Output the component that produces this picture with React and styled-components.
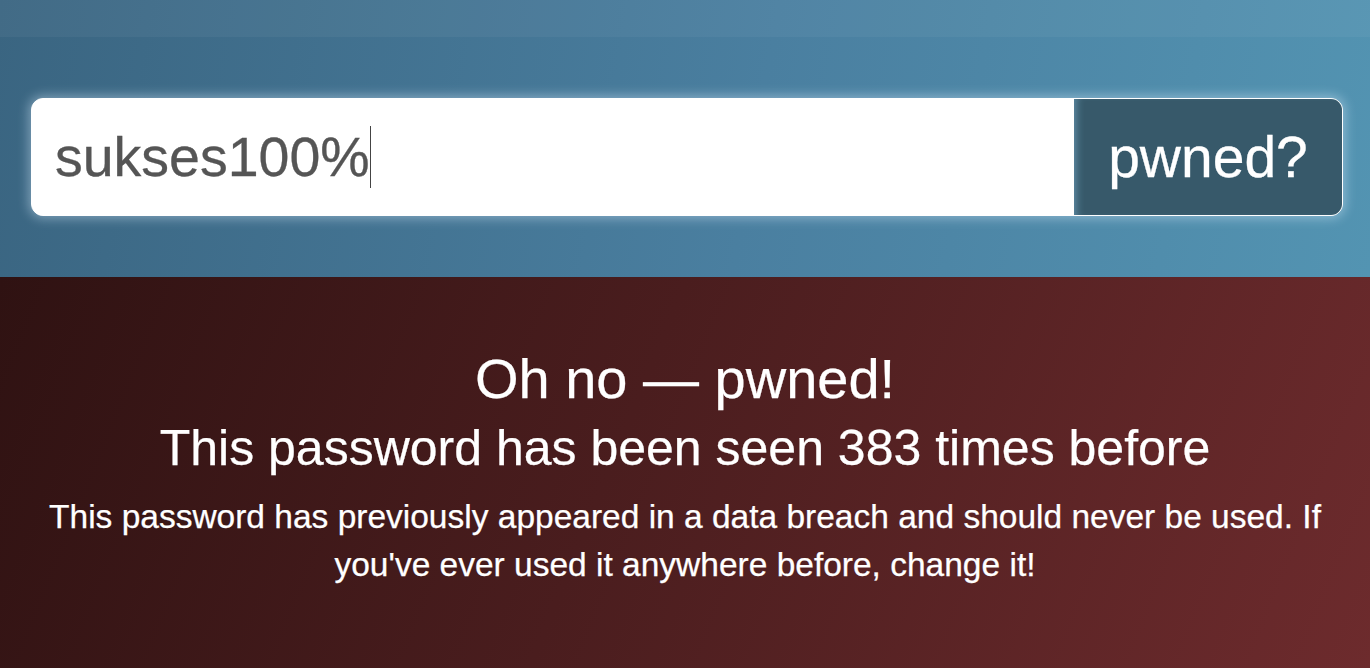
import React from "react";
import styled, { createGlobalStyle } from "styled-components";

const GlobalStyle = createGlobalStyle`
  html, body {
    margin: 0;
    padding: 0;
    height: 100%;
  }
  body {
    font-family: "Liberation Sans", Arial, Helvetica, sans-serif;
    background: #3a6581;
  }
`;

const Page = styled.div`
  width: 100%;
  min-height: 668px;
  display: flex;
  flex-direction: column;
`;

const Hero = styled.section`
  background: linear-gradient(100deg, #3a6581 0%, #4a7fa0 55%, #5394b2 100%);
  display: flex;
  flex-direction: column;
`;

const TopBand = styled.div`
  height: 37px;
  background: rgba(255, 255, 255, 0.045);
`;

const SearchWrap = styled.div`
  padding: 61px 27px 61px 31px;
`;

const SearchBox = styled.form`
  display: flex;
  height: 118px;
  box-sizing: border-box;
  border: 1.5px solid #fff;
  border-radius: 12px;
  overflow: hidden;
  background: #fff;
  box-shadow: 0 0 12px 2px rgba(220, 240, 255, 0.45);
`;

const Field = styled.div`
  flex: 1;
  display: flex;
  align-items: center;
  padding-left: 23px;
  font-size: 55.5px;
  color: #555;
  -webkit-text-stroke: 0.3px #555;
`;

const Caret = styled.span`
  display: inline-block;
  width: 1.5px;
  height: 62px;
  margin-left: 0;
  background: #444;
`;

const Button = styled.button`
  width: 268px;
  border: none;
  background: #37596a;
  color: #fff;
  font-family: inherit;
  font-size: 57px;
  padding: 0;
  -webkit-text-stroke: 0.3px #fff;
  box-shadow: inset 8px 0 9px -6px rgba(110, 160, 190, 0.8);
  cursor: pointer;
`;

const Result = styled.section`
  flex: 1;
  background: linear-gradient(112deg, #2f1212 0%, #4a1d1e 45%, #6d2b2d 100%);
  color: #fff;
  text-align: center;
  padding: 70px 20px 40px;
  -webkit-text-stroke: 0.25px #fff;
`;

const Title = styled.h2`
  margin: 0;
  font-size: 56px;
  line-height: 64px;
  font-weight: normal;
`;

const Subtitle = styled.h3`
  margin: 8px 0 0;
  font-size: 50px;
  line-height: 58px;
  font-weight: normal;
`;

const Message = styled.p`
  margin: 16px 0 0;
  font-size: 33.5px;
  line-height: 48px;
`;

export default function App() {
  return (
    <Page>
      <GlobalStyle />
      <Hero>
        <TopBand />
        <SearchWrap>
          <SearchBox onSubmit={e => e.preventDefault()}>
            <Field>
              sukses100%
              <Caret />
            </Field>
            <Button type="submit">pwned?</Button>
          </SearchBox>
        </SearchWrap>
      </Hero>
      <Result>
        <Title>Oh no — pwned!</Title>
        <Subtitle>This password has been seen 383 times before</Subtitle>
        <Message>
          This password has previously appeared in a data breach and should
          never be used. If you've ever used it anywhere before, change it!
        </Message>
      </Result>
    </Page>
  );
}
